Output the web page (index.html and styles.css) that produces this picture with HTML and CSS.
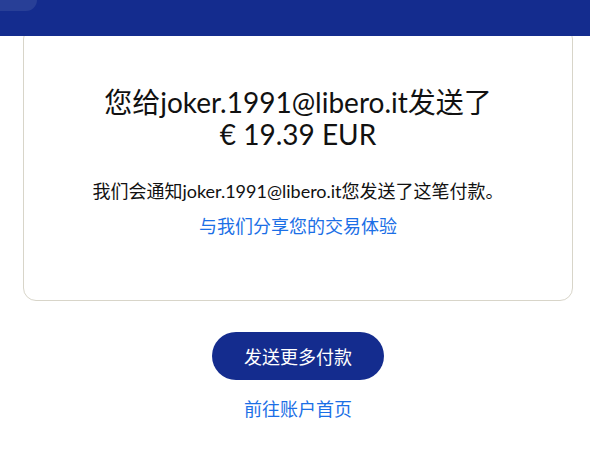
FILE: index.html
```html
<!DOCTYPE html>
<html lang="zh-CN">
<head>
<meta charset="utf-8">
<title>付款已发送</title>
<link rel="stylesheet" href="styles.css">
</head>
<body>
<header class="topbar">
  <div class="topbar-tab"></div>
</header>
<main class="page">
  <section class="card">
    <h1 class="title">您给joker.1991@libero.it发送了<br>€ 19.39 EUR</h1>
    <p class="note">我们会通知joker.1991@libero.it您发送了这笔付款。</p>
    <a class="link share" href="#">与我们分享您的交易体验</a>
  </section>
  <div class="actions">
    <a class="btn" href="#">发送更多付款</a>
    <a class="link home" href="#">前往账户首页</a>
  </div>
</main>
</body>
</html>
```

FILE: styles.css
```css
* { box-sizing: border-box; }
html, body {
  margin: 0;
  padding: 0;
  background: #ffffff;
  overflow: hidden;
}
body {
  font-family: "Lato", "Noto Sans CJK SC", sans-serif;
  color: #111111;
  width: 590px;
  height: 450px;
}
.topbar {
  position: relative;
  z-index: 2;
  height: 36px;
  background: #142c8e;
}
.topbar-tab {
  width: 37px;
  height: 11px;
  background: #283f97;
  border-bottom-right-radius: 12px;
}
.page {
  display: flex;
  flex-direction: column;
  align-items: center;
  padding-left: 6px;
}
.card {
  margin-top: -10px;
  width: 550px;
  height: 275px;
  border: 1px solid #d8d5c9;
  border-radius: 13px;
  background: #fff;
  display: flex;
  flex-direction: column;
  align-items: center;
  padding-top: 59px;
}
.title {
  margin: 0;
  font-weight: 400;
  font-size: 28px;
  line-height: 32px;
  text-align: center;
  color: #111;
}
.note {
  margin: 29px 0 0;
  font-size: 18px;
  line-height: 24px;
  color: #111;
}
.link {
  color: #1b6fe6;
  text-decoration: none;
  font-size: 18px;
  line-height: 24px;
}
.share {
  margin-top: 11px;
}
.actions {
  display: flex;
  flex-direction: column;
  align-items: center;
  margin-top: 31px;
}
.btn {
  display: flex;
  align-items: center;
  justify-content: center;
  width: 172px;
  height: 48px;
  border-radius: 24px;
  background: #142c8e;
  color: #fff;
  font-size: 18px;
  text-decoration: none;
}
.home {
  margin-top: 17px;
}
```
